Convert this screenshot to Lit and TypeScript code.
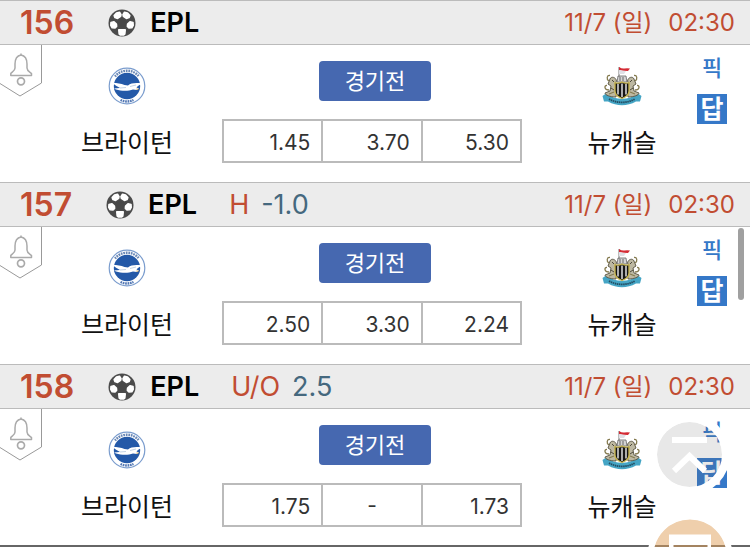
import { LitElement, html, css, nothing } from "lit";
import { customElement, property } from "lit/decorators.js";

interface Match {
  id: number;
  market?: string;
  line?: string;
  odds: string[];
}

const matches: Match[] = [
  { id: 156, odds: ["1.45", "3.70", "5.30"] },
  { id: 157, market: "H", line: "-1.0", odds: ["2.50", "3.30", "2.24"] },
  { id: 158, market: "U/O", line: "2.5", odds: ["1.75", "-", "1.73"] },
];

const ball = html`<svg class="ball" viewBox="0 0 28 28" aria-hidden="true">
  <circle cx="14" cy="14" r="13.5" fill="#4b4b4b" />
  <g fill="#fff" stroke="#fff" stroke-width="1.6" stroke-linejoin="round">
    <path d="M8.5 4 11.5 3.2 13 5.6 12.6 7.4 9.6 9.4 7 8.6 6.2 6.6z" />
    <path d="M19.5 4 16.5 3.2 15 5.6 15.4 7.4 18.4 9.4 21 8.6 21.8 6.6z" />
    <path d="M3 13.6 6 12.8 8.4 15 8.6 17.4 7 19 4.200 18.800 2.800 16.400z" />
    <path d="M25 13.6 22 12.8 19.6 15 19.400 17.400 21 19 23.800 18.800 25.200 16.400z" />
    <path d="M10.800 20.800H17.200L16.800 25 15.400 26H12.600L11.200 25z" />
  </g>
  <path d="M14 9.300 18.800 12.600 17 18.400H11L9.200 12.600z" fill="#484848" />
</svg>`;

const brighton = html`<svg class="crest" viewBox="0 0 38 38" role="img" aria-label="Brighton crest">
  <circle cx="19" cy="19" r="17.8" fill="#fff" stroke="#7b9dce" stroke-width="1.2" />
  <path d="M7 9.500A15.300 15.300 0 0 1 31 9.500" fill="none" stroke="#6886b4" stroke-width="2.400" stroke-dasharray="1.700 .8" />
  <path d="M12.500 33A15.300 15.300 0 0 0 25.500 33" fill="none" stroke="#5378b4" stroke-width="2.400" stroke-dasharray="1.700 .7" />
  <circle cx="19" cy="19" r="13.2" fill="#2459a8" />
  <path d="M5 16C9 16 13 16.500 16.500 18L20 18.500C23 16 28 15.500 34 16.500C32 18 30 18.500 28.500 20.500L31 21.500 29 23 25 22.500C20 24.500 13 24 8 22.500L6 21.500 12 21C10 19.500 7 18.500 5 16z" fill="#fff" />
  <path d="M12 21 18 20.500M22 19.500 28 18" stroke="#b3c6dd" stroke-width=".8" />
  <path d="M28.500 21.500 31.500 22 28.500 22.800z" fill="#d8a33b" />
</svg>`;

const newcastle = html`<svg class="crest tall" viewBox="0 0 40 40" role="img" aria-label="Newcastle crest">
  <path d="M0.500 30 4 27.500C13 34.500 27 34.500 36 27.500L39.500 30 38 35.500 34 35.500C25 40.500 15 40.500 6 35.500L2 35.500z" fill="#45a5c5" />
  <path d="M7 33C15 37.500 25 37.500 33 33" fill="none" stroke="#234d62" stroke-width="1.800" stroke-dasharray="1.500 .6" />
  <g fill="#bdb8a2" stroke="#55503f" stroke-width=".9" stroke-linejoin="round">
    <path d="M8 13C9 10 14 11 14.500 15L13 18 15 22 14 31C8 31 3 29 3 27L8 25 9 20 6 18z" />
    <path d="M32 13C31 10 26 11 25.500 15L27 18 25 22 26 31C32 31 37 29 37 27L32 25 31 20 34 18z" />
  </g>
  <path d="M7 15C4 13 5 9 8 9.500M7 24C2 24 2 19 5 19.500M12 26 7 28M33 15C36 13 35 9 32 9.500M33 24C38 24 38 19 35 19.500M28 26 33 28" fill="none" stroke="#857b50" stroke-width="1.300" />
  <path d="M10 14 12 16M9 22 12 24M30 14 28 16M31 22 28 24" stroke="#4d493b" />
  <path d="M16 10H24L25 16H15z" fill="#d5d5d5" stroke="#666" stroke-width=".8" />
  <path d="M18 11V15M21 11V15" stroke="#666" />
  <path d="M13 16.500Q16 18 20 16Q24 18 27 16.500V25Q27 30 20 32.500Q13 30 13 25z" fill="#161616" stroke="#c9b64e" stroke-width="1.300" />
  <path d="M16 18V28.500M20 17.500V31M24 18V28.500" stroke="#fff" stroke-width="1.300" />
  <path d="M17 1V11" stroke="#777" stroke-width="1" />
  <path d="M17 1Q20 3 22.500 2.500T28 2.500L26 5Q21 5 17 4z" fill="#d42b35" />
  <path d="M17 4Q21 5 24 5L22 8 17 8z" fill="#e0e0e6" />
</svg>`;

@customElement("match-row")
class MatchRow extends LitElement {
  @property({ attribute: false }) match!: Match;

  static styles = css`
    :host { display: block; }
    .head {
      box-sizing: border-box;
      height: 45px;
      display: flex;
      align-items: center;
      padding: 0 15px 0 20px;
      background: #ececec;
      border-top: 1px solid #bbb;
      border-bottom: 1px solid #bbb;
      color: #c14d32;
      line-height: 36px;
      white-space: nowrap;
    }
    .number { font-size: 32px; font-weight: 600; }
    .ball { width: 28px; height: 28px; margin-left: 34px; }
    .league { margin-left: 14px; font-size: 27px; font-weight: 600; color: #000; }
    .market { margin-left: 32px; font-size: 27px; }
    .line { margin-left: 12px; font-size: 27px; color: #45687e; }
    .when { margin-left: auto; display: flex; align-items: baseline; gap: 16px; font-size: 24px; }
    .body {
      height: 137px;
      display: grid;
      grid-template-columns: 32px minmax(0, 190fr) 300px minmax(0, 175fr) 53px;
    }
    .alarm {
      width: 43px;
      height: 53px;
      padding: 0;
      border: 0;
      background: none;
    }
    .alarm svg { display: block; width: 43px; height: 53px; }
    .team {
      display: flex;
      flex-direction: column;
      align-items: center;
      padding-top: 21px;
      gap: 19px;
      font-size: 25px;
      line-height: 36px;
      color: #111;
    }
    .away { padding-left: 25px; }
    .crest { width: 38px; height: 40px; }
    .tall { width: 40px; }
    .centre { padding-top: 16px; }
    .status {
      display: block;
      width: 112px;
      height: 40px;
      margin: 0 auto 18px 97px;
      padding: 0;
      border: 0;
      border-radius: 4px;
      background: #4668b0;
      color: #fff;
      font: inherit;
      font-size: 22px;
      line-height: 36px;
    }
    .odds {
      width: 300px;
      height: 44px;
      table-layout: fixed;
      border-collapse: collapse;
      font-size: 21px;
      color: #333;
    }
    .odds td { padding: 2px 11px 0 0; border: 2px solid #bbb; text-align: right; }
    .odds .none { padding: 0; text-align: center; }
    .picks {
      display: flex;
      flex-direction: column;
      align-items: flex-start;
      padding-top: 8px;
    }
    .pick, .answer {
      width: 30px;
      height: 30px;
      padding: 0;
      border: 0;
      font: inherit;
      font-weight: 700;
      text-align: center;
    }
    .pick { background: none; color: #3578c8; font-size: 22px; font-weight: 500; line-height: 30px; }
    .answer { margin-top: 11px; background: #3578c8; color: #fff; font-size: 25px; line-height: 28px; }
  `;

  render() {
    const m = this.match;
    return html`
      <header class="head">
        <span class="number">${m.id}</span>
        ${ball}
        <span class="league">EPL</span>
        ${m.market
          ? html`<span class="market">${m.market}</span><span class="line">${m.line}</span>`
          : nothing}
        <time class="when"><span>11/7 (일)</span><span>02:30</span></time>
      </header>
      <div class="body">
        <button class="alarm" aria-label="알림">
          <svg viewBox="0 0 43 53">
            <path d="M41.500 0V38L20 51 0 38.500" fill="none" stroke="#999" />
            <g fill="none" stroke="#aaa" stroke-width="1.500" stroke-linejoin="round">
              <path d="M21 8.500V10.500M21 10C16 11 15 15 15 19V23C15 26 12 27 10.800 28.500V30.500H31.500V28.500C30 27 27 26 27 23V19C27 15 26 11 21 10z" />
              <circle cx="21" cy="36.300" r="3.500" stroke-width="1.700" />
            </g>
          </svg>
        </button>
        <div class="team">${brighton}<span>브라이턴</span></div>
        <div class="centre">
          <button class="status">경기전</button>
          <table class="odds" aria-label="배당">
            <tr>${m.odds.map((o) => html`<td class=${o === "-" ? "none" : ""}>${o}</td>`)}</tr>
          </table>
        </div>
        <div class="team away">${newcastle}<span>뉴캐슬</span></div>
        <div class="picks">
          <button class="pick">픽</button>
          <button class="answer">답</button>
        </div>
      </div>
    `;
  }
}

@customElement("app-root")
class AppRoot extends LitElement {
  static styles = css`
    :host {
      display: block;
      position: relative;
      height: 100vh;
      overflow: hidden;
      background: #fff;
      font-family: Inter, "Noto Sans CJK KR", sans-serif;
    }
    .list { border-bottom: 3px solid #666; }
    .list match-row:last-child { margin-bottom: -1px; }
    .thumb {
      position: absolute;
      top: 228px;
      right: 6px;
      width: 6px;
      height: 72px;
      border-radius: 3px;
      background: #a0a0a0;
    }
    .float {
      position: absolute;
      padding: 0;
      border: 0;
      background: none;
    }
    .float svg { display: block; width: 100%; height: 100%; }
    .top { right: 20px; top: 414px; width: 81px; height: 81px; }
    .memo { right: 17px; top: 513px; width: 86px; height: 86px; }
  `;

  render() {
    return html`
      <main class="list">
        ${matches.map((m) => html`<match-row .match=${m}></match-row>`)}
      </main>
      <div class="thumb"></div>
      <button class="float top" aria-label="맨 위로">
        <svg viewBox="0 0 81 81">
          <circle cx="40.500" cy="40.500" r="32.500" fill="#666" fill-opacity=".15" />
          <circle cx="40.500" cy="40.500" r="36.500" fill="none" stroke="#fff" stroke-width="8" />
          <path d="M23 26H58M25 57 40.500 42 56 57" fill="none" stroke="#fff" stroke-width="6" />
        </svg>
      </button>
      <button class="float memo" aria-label="메모">
        <svg viewBox="0 0 86 86">
          <circle cx="43" cy="43" r="37" fill="#e0a05a" fill-opacity=".5" />
          <circle cx="43" cy="43" r="39.500" fill="none" stroke="#fff" stroke-width="6" />
          <path d="M22 21.500H64V60H22zM26.500 32V55H60.500V32z" fill="#fff" fill-rule="evenodd" />
        </svg>
      </button>
    `;
  }
}
